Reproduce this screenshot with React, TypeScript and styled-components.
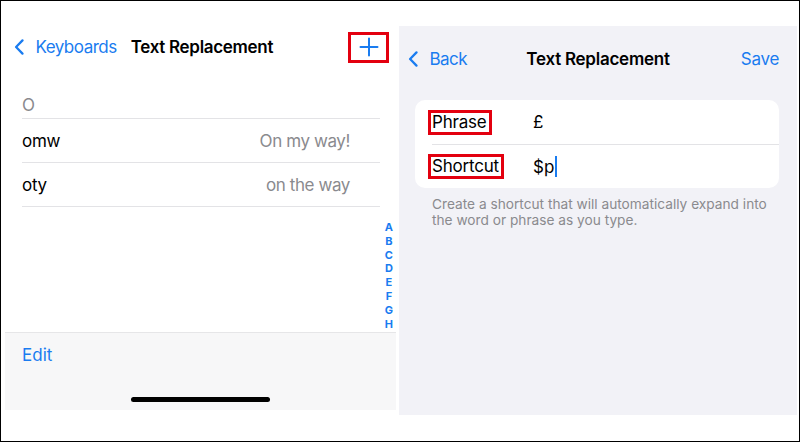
import styled, { createGlobalStyle } from "styled-components";

const GlobalStyle = createGlobalStyle`
  html, body {
    margin: 0;
    padding: 0;
    background: #fff;
  }
  body {
    font-family: Inter, "Liberation Sans", Arial, sans-serif;
  }
`;

const BLUE = "#1a7cf0";
const RED = "#e3000f";

const entries = [
  { shortcut: "omw", phrase: "On my way!" },
  { shortcut: "oty", phrase: "on the way" },
];

const letters = ["A", "B", "C", "D", "E", "F", "G", "H"];

const Chevron = ({ size = 16 }: { size?: number }) => (
  <svg width={size * 0.65} height={size} viewBox="0 0 11 17" fill="none">
    <path d="M9 1.5 L2.2 8.5 L9 15.5" stroke={BLUE} strokeWidth="2.4" strokeLinecap="round" strokeLinejoin="round" />
  </svg>
);

const PlusIcon = () => (
  <svg width="20" height="20" viewBox="0 0 20 20" fill="none">
    <path d="M10 1.5 V18.5 M1.5 10 H18.5" stroke={BLUE} strokeWidth="2" strokeLinecap="round" />
  </svg>
);

const App = () => {
  return (
    <>
      <GlobalStyle />
      <Frame>
        <LeftScreen>
          <LeftNav>
            <BackLink>
              <Chevron />
              <span>Keyboards</span>
            </BackLink>
            <LeftTitle>Text Replacement</LeftTitle>
            <AddBox>
              <PlusIcon />
            </AddBox>
          </LeftNav>
          <ListArea>
            <SectionHeader>O</SectionHeader>
            {entries.map((e) => (
              <EntryRow key={e.shortcut}>
                <span>{e.shortcut}</span>
                <EntryValue>{e.phrase}</EntryValue>
              </EntryRow>
            ))}
            <IndexBar>
              {letters.map((l) => (
                <span key={l}>{l}</span>
              ))}
            </IndexBar>
          </ListArea>
          <Toolbar>
            <EditLink>Edit</EditLink>
            <HomeIndicator />
          </Toolbar>
        </LeftScreen>

        <RightScreen>
          <RightNav>
            <BackLink>
              <Chevron />
              <span>Back</span>
            </BackLink>
            <RightTitle>Text Replacement</RightTitle>
            <SaveLink>Save</SaveLink>
          </RightNav>
          <Card>
            <FieldRow>
              <FieldLabel><Marked>Phrase</Marked></FieldLabel>
              <FieldValue>£</FieldValue>
            </FieldRow>
            <FieldRow>
              <FieldLabel><Marked>Shortcut</Marked></FieldLabel>
              <FieldValue>$p<Caret /></FieldValue>
            </FieldRow>
          </Card>
          <Hint>
            Create a shortcut that will automatically expand into the word or phrase as you type.
          </Hint>
        </RightScreen>
      </Frame>
    </>
  );
};

export default App;

const Frame = styled.div`
  width: 800px;
  height: 442px;
  box-sizing: border-box;
  border: 1px solid #000;
  display: flex;
  align-items: flex-start;
  overflow: hidden;
  color: #000;
`;

const LeftScreen = styled.div`
  width: 391px;
  height: 409px;
  margin-left: 4px;
  display: flex;
  flex-direction: column;
  background: #fff;
`;

const LeftNav = styled.div`
  height: 34px;
  margin-top: 29px;
  display: flex;
  align-items: center;
  padding-left: 9px;
  padding-right: 7px;
`;

const BackLink = styled.div`
  display: flex;
  align-items: center;
  gap: 11px;
  color: ${BLUE};
  font-size: 17px;
  letter-spacing: -0.5px;
`;

const LeftTitle = styled.div`
  margin-left: 14px;
  font-size: 17px;
  font-weight: 600;
  letter-spacing: -0.3px;
  flex: 1;
`;

const AddBox = styled.div`
  width: 41px;
  height: 31px;
  box-sizing: border-box;
  border: 3px solid ${RED};
  display: flex;
  align-items: center;
  justify-content: center;
`;

const ListArea = styled.div`
  position: relative;
  flex: 1;
`;

const SectionHeader = styled.div`
  height: 55px;
  box-sizing: border-box;
  margin: 0 16px 0 17px;
  padding-bottom: 2px;
  display: flex;
  align-items: flex-end;
  border-bottom: 1px solid #e3e3e6;
  color: #8a8a8e;
  font-size: 17px;
  line-height: 22px;
`;

const EntryRow = styled.div`
  height: 44px;
  box-sizing: border-box;
  margin: 0 16px 0 17px;
  padding-right: 30px;
  display: flex;
  align-items: center;
  justify-content: space-between;
  border-bottom: 1px solid #e3e3e6;
  font-size: 17px;
  letter-spacing: -0.3px;
`;

const EntryValue = styled.span`
  color: #8a8a8e;
  letter-spacing: -0.4px;
`;

const IndexBar = styled.div`
  position: absolute;
  right: 3px;
  bottom: 0px;
  display: flex;
  flex-direction: column;
  align-items: center;
  color: ${BLUE};
  font-size: 11px;
  font-weight: 700;
  line-height: 13.9px;
`;

const Toolbar = styled.div`
  height: 78px;
  box-sizing: border-box;
  border-top: 1px solid #e6e6e8;
  background: #f7f7f8;
  display: flex;
  flex-direction: column;
  align-items: flex-start;
  padding: 11px 0 0 17px;
`;

const EditLink = styled.div`
  color: ${BLUE};
  font-size: 17px;
  line-height: 22px;
`;

const HomeIndicator = styled.div`
  width: 139px;
  height: 5px;
  border-radius: 3px;
  background: #000;
  align-self: center;
  margin-top: 31px;
  margin-left: -17px;
`;

const RightScreen = styled.div`
  width: 398px;
  height: 389px;
  margin-top: 25px;
  margin-left: 3px;
  background: #f2f2f7;
  display: flex;
  flex-direction: column;
`;

const RightNav = styled.div`
  height: 22px;
  margin-top: 22px;
  display: grid;
  grid-template-columns: 1fr auto 1fr;
  align-items: center;
  padding: 0 18px;
  & > ${BackLink} {
    margin-left: -9px;
  }
`;

const RightTitle = styled.div`
  font-size: 17px;
  font-weight: 600;
  letter-spacing: -0.25px;
`;

const SaveLink = styled.div`
  justify-self: end;
  color: ${BLUE};
  font-size: 17px;
  letter-spacing: -0.3px;
`;

const Card = styled.div`
  margin: 30px 18px 0 16px;
  background: #fff;
  border-radius: 10px;
  overflow: hidden;
`;

const FieldRow = styled.div`
  height: 44px;
  margin-left: 17px;
  display: flex;
  align-items: center;
  box-sizing: border-box;
  & + & {
    border-top: 1px solid #e3e3e6;
  }
`;

const FieldLabel = styled.div`
  width: 101px;
  font-size: 17px;
  letter-spacing: -0.2px;
`;

const Marked = styled.span`
  display: inline-block;
  margin-left: -4px;
  padding: 0 2px 0 1px;
  border: 3px solid ${RED};
  line-height: 19px;
`;

const FieldValue = styled.div`
  display: flex;
  align-items: center;
  font-size: 17px;
`;

const Caret = styled.span`
  width: 2px;
  height: 21px;
  margin-left: 1px;
  background: ${BLUE};
`;

const Hint = styled.div`
  margin: 8px 20px 0 33px;
  color: #8a8a8e;
  font-size: 13.7px;
  line-height: 16px;
`;
